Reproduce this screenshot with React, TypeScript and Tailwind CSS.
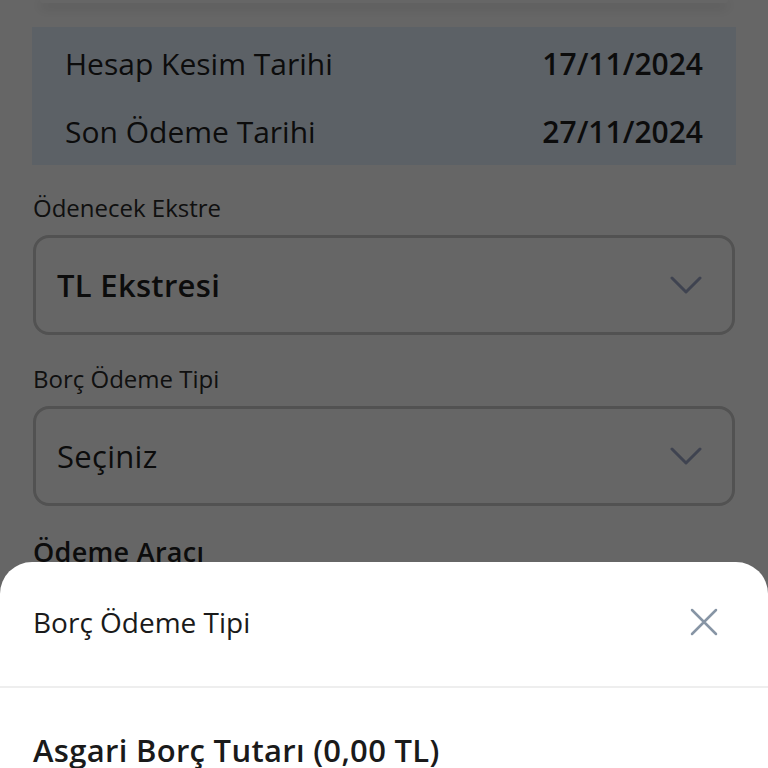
const dates = [
  { label: "Hesap Kesim Tarihi", value: "17/11/2024" },
  { label: "Son Ödeme Tarihi", value: "27/11/2024" },
];

function Select({ value, bold }: { value: string; bold?: boolean }) {
  return (
    <div className="mt-[12px] mx-[33px] h-[100px] rounded-[16px] border-[3px] border-[#cccccc] flex items-center justify-between pl-[21px] pr-[30px]">
      <span className={`text-[31px] leading-[36px] tracking-[0.3px] text-[#1e1e1e] ${bold ? "font-semibold" : ""}`}>{value}</span>
      <svg width="32" height="18" viewBox="0 0 32 18" fill="none" className="text-[#9da8c8]">
        <path d="M2 2 L16 16 L30 2" stroke="currentColor" strokeWidth="3" strokeLinecap="round" strokeLinejoin="round" />
      </svg>
    </div>
  );
}

export default function App() {
  return (
    <div className="relative h-[768px] overflow-hidden bg-white" style={{ fontFamily: '"Open Sans", sans-serif' }}>
      <div className="mx-[40px] h-[3px] bg-white rounded-b-[10px] shadow-[0_4px_12px_rgba(0,0,0,0.25)]" />

      <div className="mt-[24px] mx-[32px] bg-[#e6f2ff] pt-[2px] px-[33px]">
        {dates.map((d) => (
          <div key={d.label} className="h-[68px] flex items-center justify-between">
            <span className="text-[30px] text-[#1e1e1e]">{d.label}</span>
            <span className="text-[30px] font-semibold text-[#1e1e1e]">{d.value}</span>
          </div>
        ))}
      </div>

      <p className="mt-[28px] mx-[33px] text-[24px] leading-[30px] text-[#2a2a2a]">Ödenecek Ekstre</p>
      <Select value="TL Ekstresi" bold />

      <p className="mt-[29px] mx-[33px] text-[24px] leading-[30px] text-[#2a2a2a]">Borç Ödeme Tipi</p>
      <Select value="Seçiniz" />

      <p className="mt-[30px] mx-[33px] text-[27px] leading-[32px] tracking-[0.3px] font-semibold text-[#1e1e1e]">Ödeme Aracı</p>

      <div className="absolute inset-0 bg-black/60" />

      <div className="absolute left-0 right-0 top-[562px] bottom-0 bg-white rounded-t-[32px]">
        <div className="h-[126px] pt-[44px] pl-[33px] pr-[50px] flex items-start justify-between border-b-2 border-[#eeeeee]">
          <span className="text-[28px] leading-[32px] font-medium text-[#1a1a1a]">Borç Ödeme Tipi</span>
          <svg width="28" height="28" viewBox="0 0 28 28" fill="none" className="mt-[2px] text-[#8795a5]">
            <path d="M2 2 L26 26 M26 2 L2 26" stroke="currentColor" strokeWidth="2.5" strokeLinecap="round" />
          </svg>
        </div>
        <p className="pt-[46px] px-[33px] text-[31px] leading-[32px] tracking-[0.3px] font-semibold text-[#1a1a1a]">Asgari Borç Tutarı (0,00 TL)</p>
      </div>
    </div>
  );
}
